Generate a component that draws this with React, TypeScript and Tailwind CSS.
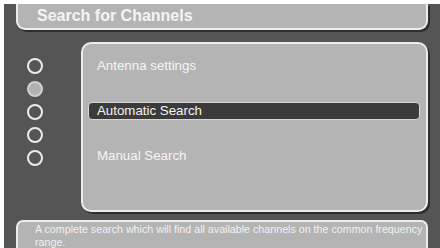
const items = ["Antenna settings", "Automatic Search", "Manual Search"];
const selected = 1;

function Dots() {
  return (
    <div className="flex w-[65px] flex-col items-start gap-[7px] pt-[16px] pl-[11px]">
      {[0, 1, 2, 3, 4].map((i) => (
        <div
          key={i}
          className={
            i === 1
              ? "h-[16px] w-[16px] rounded-full border-2 border-[#cfcfcf] bg-[#b2b2b2]"
              : "h-[16px] w-[16px] rounded-full border-2 border-[#ececec]"
          }
        />
      ))}
    </div>
  );
}

export default function App() {
  return (
    <div
      className="h-[248px] w-[440px] overflow-hidden bg-white pt-[4px] pl-[4px]"
      style={{ fontFamily: '"Liberation Sans", Arial, sans-serif' }}
    >
      <div className="flex h-full flex-col bg-[#555555] pl-[12px] pr-[12px]">
        <header className="flex h-[26px] items-center rounded-b-[9px] border-x-2 border-b-2 border-[#ededed] bg-[#b4b4b4] pl-[19px] shadow-[2px_2px_0_#2e2e2e]">
          <h1 className="text-[16px] font-bold text-[#f4f4f4]">Search for Channels</h1>
        </header>

        <div className="mt-[12px] flex">
          <Dots />
          <div className="flex h-[170px] flex-1 flex-col gap-[27px] rounded-[10px] border-2 border-[#ededed] bg-[#b4b4b4] pt-[13px] pr-[6px] pl-[5px] shadow-[2px_2px_0_#2e2e2e]">
            {items.map((label, i) => (
              <div
                key={label}
                className={
                  i === selected
                    ? "flex h-[18px] items-center rounded-[4px] border border-[#d6d6d6] bg-[#3b3b3b] pl-[8px] text-[13.3px] text-[#f4f4f4]"
                    : "flex h-[18px] items-center pl-[9px] text-[13.3px] text-[#f4f4f4]"
                }
              >
                {label}
              </div>
            ))}
          </div>
        </div>

        <footer className="mt-[8px] flex-1 rounded-t-[7px] border-x-2 border-t-2 border-[#ededed] bg-[#b4b4b4] pt-[1px] pl-[17px] text-[10.7px] leading-[13px] text-[#f2f2f2]">
          A complete search which will find all available channels on the common frequency range.
        </footer>
      </div>
    </div>
  );
}
